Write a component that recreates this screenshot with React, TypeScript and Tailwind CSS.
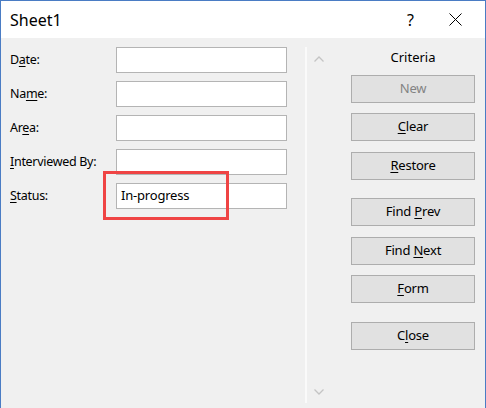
import React from 'react';

const font = { fontFamily: '"Noto Sans", "Open Sans", sans-serif' };

function U({ children }: { children: React.ReactNode }) {
  return <span className="underline underline-offset-[2px] decoration-1">{children}</span>;
}

const fields: { label: React.ReactNode; value?: string }[] = [
  { label: <>D<U>a</U>te:</> },
  { label: <>Na<U>m</U>e:</> },
  { label: <>Ar<U>e</U>a:</> },
  { label: <><U>I</U>nterviewed By:</> },
  { label: <><U>S</U>tatus:</>, value: 'In-progress' },
];

function Btn({ children, disabled, className = '' }: { children: React.ReactNode; disabled?: boolean; className?: string }) {
  return (
    <button
      className={`w-[124px] h-[28px] bg-[#e1e1e1] border border-[#adadad] text-[13px] tracking-[-0.2px] flex items-center justify-center ${disabled ? 'text-[#838383]' : 'text-black'} ${className}`}
    >
      <span>{children}</span>
    </button>
  );
}

export default function App() {
  return (
    <div className="w-[486px] h-[408px] flex flex-col border-x border-t border-[#4a7cc4] bg-[#f0f0f0] text-black" style={font}>
      <div className="h-[37px] bg-white flex items-center shrink-0">
        <span className="ml-[9px] text-[16px]">Sheet1</span>
        <span className="ml-auto text-[16px] mr-[35px]">?</span>
        <svg width="13" height="13" viewBox="0 0 13 13" className="mr-[23px]">
          <path d="M0.5 0.5 L12.5 12.5 M12.5 0.5 L0.5 12.5" stroke="#000" strokeWidth="1" />
        </svg>
      </div>

      <div className="flex flex-1">
        <div className="w-[304px] pl-[9px] pt-[9px] flex flex-col gap-[8px]">
          {fields.map((f, i) => (
            <div key={i} className="flex items-center h-[26px]">
              <span className="w-[106px] text-[12.5px] tracking-[-0.3px]">{f.label}</span>
              <div className="relative w-[171px] h-[26px] bg-white border border-[#b4b4b4] flex items-center">
                {f.value && <span className="ml-[4px] text-[13px] tracking-[-0.2px]">{f.value}</span>}
                {f.value && (
                  <div className="absolute left-[-14px] top-[-13px] w-[126px] h-[49px] border-[3px] border-[#ef4444]" />
                )}
              </div>
            </div>
          ))}
        </div>

        <div className="flex flex-1 pt-[9px] pb-[5px]">
          <div className="w-[26px] border-l-2 border-[#fafafa] flex flex-col justify-between items-center pt-[9px] pb-[8px]">
            <svg width="10" height="6" viewBox="0 0 10 6">
              <path d="M0.5 5.5 L5 1 L9.5 5.5" stroke="#c4c4c4" strokeWidth="1.3" fill="none" />
            </svg>
            <svg width="10" height="6" viewBox="0 0 10 6">
              <path d="M0.5 0.5 L5 5 L9.5 0.5" stroke="#c4c4c4" strokeWidth="1.3" fill="none" />
            </svg>
          </div>
          <div className="ml-[20px] flex flex-col">
            <div className="h-[21px] flex items-center justify-center w-[124px] text-[13px]">Criteria</div>
            <Btn disabled className="mt-[7px]">New</Btn>
            <Btn className="mt-[10px]"><U>C</U>lear</Btn>
            <Btn className="mt-[11px]"><U>R</U>estore</Btn>
            <Btn className="mt-[18px]">Find <U>P</U>rev</Btn>
            <Btn className="mt-[11px]">Find <U>N</U>ext</Btn>
            <Btn className="mt-[10px]"><U>F</U>orm</Btn>
            <Btn className="mt-[19px]">C<U>l</U>ose</Btn>
          </div>
        </div>
      </div>
    </div>
  );
}
